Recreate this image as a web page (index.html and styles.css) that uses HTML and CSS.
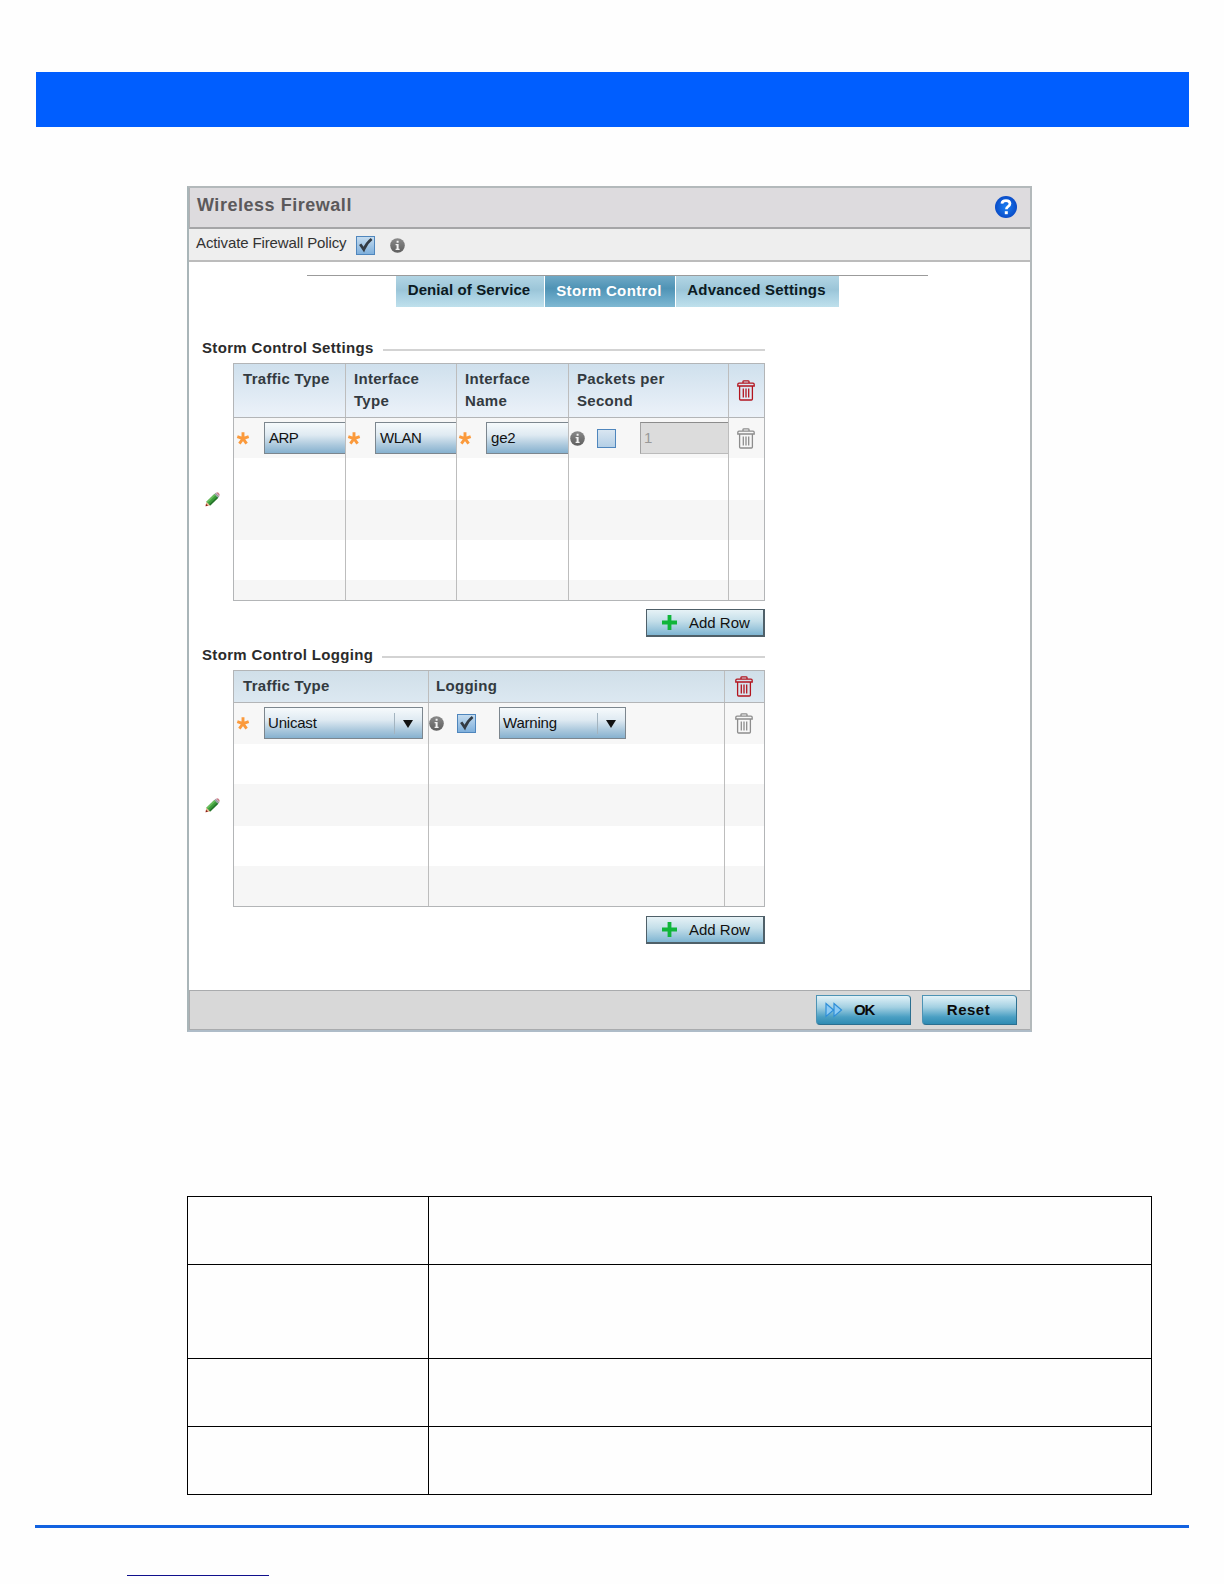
FILE: index.html
```
<!DOCTYPE html>
<html lang="en">

<head>
    <meta charset="UTF-8">
    <title>Wireless Firewall</title>
    <link rel="stylesheet" href="styles.css">
</head>

<body>
    <!-- shared icons -->
    <svg class="sprite" width="0" height="0">
        <defs>
            <linearGradient id="grey-ball" x1="0" y1="0" x2="0" y2="1">
                <stop offset="0" stop-color="#8a8a8a" />
                <stop offset="1" stop-color="#5e5e5e" />
            </linearGradient>
            <radialGradient id="blue-ball">
                <stop offset="0" stop-color="#1a80f4" />
                <stop offset="1" stop-color="#0a4cc8" />
            </radialGradient>
        </defs>
        <symbol id="star" viewBox="0 0 14 14">
            <path d="M7 7.6V1.2M7 7.6L1.3 5.6M7 7.6L12.7 5.6M7 7.6L3.4 12.6M7 7.6L10.6 12.6" stroke="#fb9a3c" stroke-width="2.9" fill="none" />
        </symbol>
        <symbol id="info" viewBox="0 0 15 15">
            <circle cx="7.5" cy="7.5" r="7.3" fill="url(#grey-ball)" />
            <path d="M6.6 2.8h2v2h-2zM5.6 6h3v4.8h1V12H5.6v-1.2h1V7.2h-1z" fill="#f2f2f2" />
        </symbol>
        <symbol id="trash" viewBox="0 0 18 21">
            <path d="M6 3V1.6Q6 .8 7 .8h4q1 0 1 .8V3M.8 6V4.4Q.8 3.2 2 3.2h14q1.2 0 1.2 1.2V6zM2.6 6v13q0 1 1 1h10.8q1 0 1-1V6M6.3 8.5v9M9 8.5v9M11.7 8.5v9" fill="none" stroke="currentColor" stroke-width="1.3" />
        </symbol>
        <symbol id="tick" viewBox="0 0 19 19">
            <path d="M4.2 8.2l3.6 5.4Q10.4 7 15.6 3" fill="none" stroke="#333b44" stroke-width="2.7" />
        </symbol>
        <symbol id="pencil" viewBox="0 0 15 15">
            <path d="M.6 14.2l.8-4.4 3.8 3.8z" fill="#e8b48c" />
            <path d="M.6 14.2l.4-2.4 2 2z" fill="#8a1c1c" />
            <path d="M1.4 9.8L9.4 2l3.8 3.8-8 7.8z" fill="#3c9c3a" />
            <path d="M1.4 9.8L9.4 2l1.2 1.2-8 7.8z" fill="#68bd5c" />
            <path d="M4.2 12.6l8-7.8 1 1-8 7.8z" fill="#24702a" />
            <path d="M9.4 2l1.4-1.3 3.6 3.6-1.2 1.5z" fill="#9a9aa4" />
            <path d="M11 .8q1.4-1 2.8.2 1.4 1.4.6 3z" fill="#cc7f8c" />
        </symbol>
        <symbol id="plus" viewBox="0 0 15 15">
            <path d="M7.5 0v15M0 7.5h15" stroke="#10b53a" stroke-width="3.8" />
        </symbol>
    </svg>

    <div class="banner"></div>

    <div class="dialog">
        <div class="dialog-title">
            <h1>Wireless Firewall</h1>
            <svg class="help" viewBox="0 0 22 22">
                <circle cx="11" cy="11" r="11" fill="url(#blue-ball)" />
                <path d="M6.9 7.6Q7.2 4.6 11 4.6t4 3q0 1.8-2 3-1.6 1-1.6 2.6" fill="none" stroke="#fff" stroke-width="2.7" />
                <path d="M9.8 15.2h3v3h-3z" fill="#fff" />
            </svg>
        </div>
        <div class="activate">
            <span>Activate Firewall Policy</span>
            <i class="checkbox checked"><svg><use href="#tick" /></svg></i>
            <svg class="info"><use href="#info" /></svg>
        </div>

        <div class="content">
            <div class="tabs">
                <span class="tab tab-denial">Denial of Service</span>
                <span class="tab tab-storm active">Storm Control</span>
                <span class="tab tab-advanced">Advanced Settings</span>
            </div>

            <div class="section">
                <div class="legend"><h2>Storm Control Settings</h2></div>
                <div class="editor">
                    <svg class="pencil"><use href="#pencil" /></svg>
                    <div class="grid settings">
                        <div class="row head">
                            <span>Traffic Type</span>
                            <span>Interface<br>Type</span>
                            <span>Interface<br>Name</span>
                            <span>Packets per<br>Second</span>
                            <span class="bin red"><svg><use href="#trash" /></svg></span>
                        </div>
                        <div class="row first">
                            <span><svg class="star"><use href="#star" /></svg><b class="select arp">ARP</b></span>
                            <span><svg class="star"><use href="#star" /></svg><b class="select wlan">WLAN</b></span>
                            <span><svg class="star"><use href="#star" /></svg><b class="select">ge2</b></span>
                            <span class="rate">
                                <svg class="info"><use href="#info" /></svg>
                                <i class="checkbox"></i>
                                <b class="input">1</b>
                            </span>
                            <span class="bin"><svg><use href="#trash" /></svg></span>
                        </div>
                        <div class="row second"><span></span><span></span><span></span><span></span><span></span></div>
                        <div class="row odd"><span></span><span></span><span></span><span></span><span></span></div>
                        <div class="row"><span></span><span></span><span></span><span></span><span></span></div>
                        <div class="row odd last"><span></span><span></span><span></span><span></span><span></span></div>
                    </div>
                </div>
                <div class="add-row"><svg><use href="#plus" /></svg>Add Row</div>
            </div>

            <div class="section">
                <div class="legend"><h2>Storm Control Logging</h2></div>
                <div class="editor">
                    <svg class="pencil"><use href="#pencil" /></svg>
                    <div class="grid logging">
                        <div class="row head">
                            <span>Traffic Type</span>
                            <span>Logging</span>
                            <span class="bin red"><svg><use href="#trash" /></svg></span>
                        </div>
                        <div class="row first">
                            <span><svg class="star"><use href="#star" /></svg><b class="select unicast">Unicast<i class="arrow"></i></b></span>
                            <span class="rate">
                                <svg class="info"><use href="#info" /></svg>
                                <i class="checkbox checked"><svg><use href="#tick" /></svg></i>
                                <b class="select warning">Warning<i class="arrow"></i></b>
                            </span>
                            <span class="bin"><svg><use href="#trash" /></svg></span>
                        </div>
                        <div class="row"><span></span><span></span><span></span></div>
                        <div class="row odd third"><span></span><span></span><span></span></div>
                        <div class="row"><span></span><span></span><span></span></div>
                        <div class="row odd"><span></span><span></span><span></span></div>
                    </div>
                </div>
                <div class="add-row"><svg><use href="#plus" /></svg>Add Row</div>
            </div>
        </div>

        <div class="dialog-foot">
            <div class="button ok">
                <svg viewBox="0 0 18 16">
                    <path d="M1 1.5l7.5 6.5L1 14.5zM9 1.5l7.5 6.5L9 14.5z" fill="#8ccbf5" stroke="#2f8fd8" stroke-width="1.2" />
                </svg>
                <span>OK</span>
            </div>
            <div class="button reset"><span>Reset</span></div>
        </div>
    </div>

    <table class="doc-table">
        <tr><td class="name"></td><td></td></tr>
        <tr class="tall"><td></td><td></td></tr>
        <tr><td></td><td></td></tr>
        <tr><td></td><td></td></tr>
    </table>

    <div class="foot-rule"></div>
    <div class="foot-link"></div>
</body>

</html>
```
FILE: styles.css
```
* {
    box-sizing: border-box;
}

body,
h1,
h2 {
    padding: 0;
    margin: 0;
}

body {
    padding: 72px 35px 0 36px;
    height: 1584px;
    background: #fefefe;
    font: 15px/20px "Liberation Sans", Arial, sans-serif;
    color: #222;
    overflow: hidden;
}

.sprite {
    display: block;
    height: 0;
}

b,
i {
    font-weight: normal;
    font-style: normal;
}

.banner {
    height: 55px;
    background: #005eff;
}

/* dialog */
.dialog {
    display: flex;
    flex-direction: column;
    width: 845px;
    height: 846px;
    margin: 59px 0 0 151px;
    border: 2px solid #b3b9bb;
    border-left-color: #a9b5b8;
    border-bottom-color: #aebcc8;
    background: #fff;
}

.dialog-title {
    display: flex;
    justify-content: space-between;
    height: 41px;
    padding: 7px 13px 0 7px;
    background: #dddbde;
    border-bottom: 2px solid #a5a5a7;
    border-left: 1px solid #b0b0b2;
}

.dialog-title h1 {
    font-size: 18px;
    line-height: 20px;
    letter-spacing: 0.53px;
    color: #5b595b;
}

.help {
    width: 22px;
    height: 22px;
    margin: 1px 0 0;
}

.activate {
    display: flex;
    height: 33px;
    padding: 4px 0 0 7px;
    background: #eee;
    border-bottom: 2px solid #bcbcbc;
}

.activate span {
    width: 160px;
    letter-spacing: -0.12px;
    color: #333;
}

.activate .checkbox {
    margin: 3px 0 0;
}

.activate .info {
    margin: 5px 0 0 15px;
}

.content {
    flex: 1;
    padding-top: 13px;
}

.tabs {
    display: flex;
    justify-content: center;
    gap: 1px;
    width: 621px;
    height: 32px;
    margin: 0 0 31px 118px;
    border-top: 1px solid #9b9b9b;
    font-weight: bold;
    color: #0b1a22;
}

.tab {
    height: 31px;
    padding: 4px 2px 0 0;
    text-align: center;
    background: linear-gradient(#b2d5e4, #9bc5d8 45%, #a5cee0 60%, #bfe0ec);
}

.tab-denial {
    width: 148px;
    letter-spacing: 0.1px;
}

.tab-storm {
    width: 130px;
    letter-spacing: 0.37px;
}

.tab-advanced {
    width: 163px;
    letter-spacing: 0.2px;
}

.tab.active {
    padding-top: 5px;
    color: #fff;
    background: linear-gradient(#6fa9c6, #4f93b5 40%, #62a3c3 65%, #7fb8d2);
}

/* sections */
.section {
    width: 563px;
    margin-left: 13px;
}

.legend {
    display: flex;
    align-items: center;
    gap: 9px;
    height: 20px;
    margin-bottom: 5px;
}

.legend h2 {
    font-size: 15px;
    line-height: 20px;
    letter-spacing: 0.34px;
    color: #2b2b2b;
}

.legend::after {
    content: "";
    flex: 1;
    height: 2px;
    margin-top: 3px;
    background: #d3d3d3;
}

.editor {
    display: flex;
    align-items: center;
    justify-content: space-between;
}

.pencil {
    width: 15px;
    height: 15px;
    margin: 34px 0 0 3px;
}

.grid {
    width: 532px;
    border: 1px solid #b3b5b7;
}

.row {
    display: grid;
    height: 40px;
}

.settings .row {
    grid-template-columns: 112px 111px 112px 160px 35px;
}

.logging .row {
    grid-template-columns: 195px 296px 39px;
}

.row > span {
    display: flex;
    min-width: 0;
    overflow: hidden;
    border-right: 1px solid #bdbdbd;
}

.row > span:last-child {
    border-right: 0;
}

.row.odd {
    background: #f6f6f6;
}

.settings .second {
    height: 42px;
}

.settings .last {
    height: 20px;
}

.logging .third {
    height: 42px;
}

.row.first {
    background: #f7f7f7;
}

.logging .first {
    height: 41px;
}

.row.head {
    height: 54px;
    background: linear-gradient(#cfe0ed, #ecf2f9);
    border-bottom: 1px solid #b3b5b7;
    font-weight: bold;
    line-height: 21.5px;
    letter-spacing: 0.3px;
    color: #333a40;
}

.row.head > span {
    padding: 4px 0 0 8px;
}

.row.head > span:first-child {
    padding-left: 9px;
}

.logging .row.head {
    height: 32px;
    background: linear-gradient(#d0dfe9, #dce8f1);
}

.logging .row.head > span:nth-child(2) {
    padding-left: 7px;
}

.row > .bin,
.row.head > .bin {
    align-items: center;
    justify-content: center;
    padding: 0 1px 0 0;
    color: #8d8d8d;
}

.row.head > .red {
    color: #b3151f;
}

.bin svg {
    width: 18px;
    height: 21px;
}

.first > span {
    padding: 4px 0 0 1px;
}

.first > span:first-child {
    padding-left: 2px;
}

.star {
    flex: none;
    width: 14px;
    height: 14px;
    margin: 9px 14px 0 0;
}

.row.first > .bin {
    padding: 0 1px 0 0;
}

.info {
    flex: none;
    width: 15px;
    height: 15px;
}

.rate .info {
    margin: 9px 12px 0 0;
}

.logging .rate .info {
    margin-left: -1px;
    margin-right: 13px;
}

.rate .checkbox {
    margin-top: 7px;
}

.checkbox {
    flex: none;
    width: 19px;
    height: 19px;
    border: 1px solid #4f86bd;
    background: linear-gradient(#d9e6f1, #b4cfe6);
}

.checkbox.checked {
    background: linear-gradient(#c4dbef, #7fb0dc);
}

.checkbox svg {
    display: block;
    width: 19px;
    height: 19px;
    margin: -1px;
}

.select {
    display: flex;
    flex: none;
    width: 140px;
    height: 32px;
    padding: 5px 0 0 4px;
    border: 1px solid #7c868e;
    background: linear-gradient(#f6fafc, #dfeaf2 40%, #a9c7dc 75%, #86b1cf);
    letter-spacing: -0.2px;
    color: #111;
}

.select.arp {
    letter-spacing: -0.6px;
}

.select.wlan {
    letter-spacing: -0.5px;
}

.select.unicast {
    width: 159px;
    padding-left: 3px;
}

.select.warning {
    width: 127px;
    margin-left: 23px;
    padding-left: 3px;
}

.arrow {
    width: 28px;
    height: 21px;
    margin-left: auto;
    border-left: 1px solid #a3b4c0;
}

.arrow::after {
    content: "";
    display: block;
    margin: 7px 0 0 8px;
    width: 0;
    border: 5px solid transparent;
    border-top: 8px solid #111;
    border-bottom: 0;
}

.input {
    flex: none;
    width: 100px;
    height: 32px;
    margin-left: 24px;
    padding: 5px 0 0 3px;
    border: 1px solid #bbb;
    border-top-color: #8c8c8c;
    border-left-color: #a2a2a2;
    background: #dcdcdc;
    color: #999;
}

.add-row {
    display: flex;
    align-items: center;
    width: 119px;
    height: 28px;
    margin: 8px 0 8px auto;
    padding: 0 0 0 15px;
    border: 1px solid #4f6069;
    border-width: 1px 2px 2px 1px;
    background: linear-gradient(#e6f2f6, #c3dee9 45%, #7fb5d2);
    color: #111;
}

.add-row svg {
    width: 15px;
    height: 15px;
    margin-right: 12px;
}

.section:last-child .add-row {
    margin-top: 9px;
}

/* footer */
.dialog-foot {
    display: flex;
    justify-content: flex-end;
    gap: 11px;
    height: 40px;
    padding: 4px 13px 0 0;
    background: #d8d8d8;
    border: 1px solid #a9abad;
    border-right: 0;
}

.button {
    display: flex;
    align-items: center;
    width: 95px;
    height: 30px;
    border: 1px solid #4d93b4;
    border-color: #4d93b4 #2b6f90 #2b6f90 #4d93b4;
    border-radius: 0 4px 0 4px;
    background: linear-gradient(#e2f2f8, #a3d0e2 40%, #4a9fc3 75%, #2f8bb3);
    font-weight: bold;
    color: #0a0a0a;
}

.ok svg {
    width: 18px;
    height: 16px;
    margin: 0 11px 0 8px;
}

.ok span {
    letter-spacing: -1.2px;
}

.reset {
    justify-content: center;
    padding-right: 2px;
    letter-spacing: 0.5px;
}

/* document table */
.doc-table {
    width: 965px;
    margin: 164px 0 0 151px;
    border-collapse: collapse;
}

.doc-table td {
    height: 68px;
    padding: 0;
    border: 1px solid #000;
}

.doc-table .tall td {
    height: 94px;
}

.doc-table .name {
    width: 241px;
}

.foot-rule {
    height: 3px;
    margin: 30px 0 0 -1px;
    background: #1262e0;
}

.foot-link {
    width: 142px;
    height: 1px;
    margin: 47px 0 0 91px;
    background: #10108c;
}
```
